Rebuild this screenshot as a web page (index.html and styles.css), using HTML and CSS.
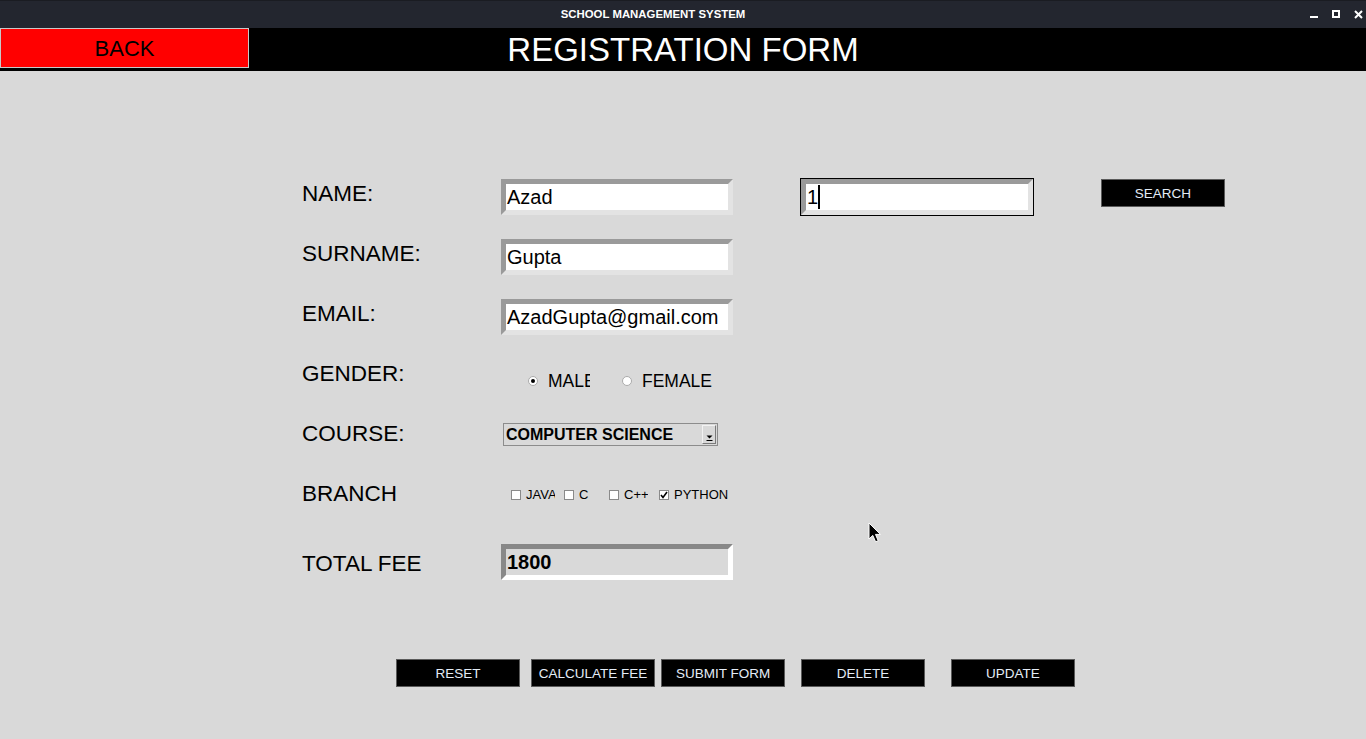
FILE: index.html
```html
<!DOCTYPE html>
<html lang="en">
<head>
<meta charset="utf-8">
<title>SCHOOL MANAGEMENT SYSTEM</title>
<link rel="stylesheet" href="styles.css">
</head>
<body>
<div class="window">
  <div class="titlebar">
    <span class="wtitle">SCHOOL MANAGEMENT SYSTEM</span>
    <div class="controls">
      <span class="ctl-min"></span>
      <span class="ctl-max"></span>
      <svg class="ctl-close" width="9" height="9" viewBox="0 0 9 9"><path d="M1 1 L8 8 M8 1 L1 8" stroke="#fff" stroke-width="2"/></svg>
    </div>
  </div>
  <header class="head">
    <button class="back">BACK</button>
    <h1 class="title">REGISTRATION FORM</h1>
    <span class="spacer"></span>
  </header>
  <main class="content">
    <div class="form">
      <div class="lbl">NAME:</div>
      <div class="cell"><div class="entry"><span class="val">Azad</span></div></div>
      <div class="cell"><div class="focus-ring"><div class="entry"><span class="val">1</span><span class="caret"></span></div></div></div>
      <div class="cell"><button class="tkbtn">SEARCH</button></div>

      <div class="lbl">SURNAME:</div>
      <div class="cell span3"><div class="entry"><span class="val">Gupta</span></div></div>

      <div class="lbl">EMAIL:</div>
      <div class="cell span3"><div class="entry"><span class="val">AzadGupta@gmail.com</span></div></div>

      <div class="lbl">GENDER:</div>
      <div class="cell span3">
        <div class="radios">
          <span class="radio on"></span><span class="rtext male">MALE</span>
          <span class="radio fem"></span><span class="rtext">FEMALE</span>
        </div>
      </div>

      <div class="lbl">COURSE:</div>
      <div class="cell span3">
        <div class="select">
          <span class="sel-text">COMPUTER SCIENCE</span>
          <span class="sel-btn"><svg width="7" height="6" viewBox="0 0 7 6"><path d="M0.5 0.5 H6.5 L3.5 3.5 Z" fill="#000"/><path d="M0.5 5.5 H6.5" stroke="#000" stroke-width="1"/></svg></span>
        </div>
      </div>

      <div class="lbl">BRANCH</div>
      <div class="cell span3">
        <div class="checks">
          <span class="chk w-java"><span class="box"></span><span class="ctext">JAVA</span></span>
          <span class="chk w-c"><span class="box"></span><span class="ctext">C</span></span>
          <span class="chk w-cpp"><span class="box"></span><span class="ctext">C++</span></span>
          <span class="chk w-py"><span class="box"><svg width="8" height="8" viewBox="0 0 8 8"><path d="M1 4 L3 6.5 L7 1" stroke="#000" stroke-width="1.6" fill="none"/></svg></span><span class="ctext">PYTHON</span></span>
        </div>
      </div>

      <div class="lbl lbl-fee">TOTAL FEE</div>
      <div class="cell span3"><div class="entry fee"><span class="val">1800</span></div></div>
    </div>

    <div class="actions">
      <button class="tkbtn">RESET</button>
      <button class="tkbtn g11">CALCULATE FEE</button>
      <button class="tkbtn g6">SUBMIT FORM</button>
      <button class="tkbtn g16">DELETE</button>
      <button class="tkbtn g26">UPDATE</button>
    </div>
  </main>
  <svg class="pointer" width="14" height="22" viewBox="0 0 14 22"><path d="M1 1 L1 17 L4.8 13.4 L7.6 19.8 L10.2 18.7 L7.5 12.4 L12.5 12.4 Z" fill="#000" stroke="#fff" stroke-width="1"/></svg>
</div>
</body>
</html>
```
FILE: styles.css
```css
* { box-sizing: border-box; }
html, body { margin: 0; padding: 0; }
body {
  width: 1366px;
  height: 739px;
  overflow: hidden;
  background: #d9d9d9;
  font-family: "Liberation Sans", Arial, sans-serif;
}
.window {
  position: relative;
  width: 1366px;
  height: 739px;
  background: #d9d9d9;
}

/* title bar */
.titlebar {
  height: 28px;
  background: #23262f;
  border-top: 1px solid #1a1c22;
  display: flex;
  align-items: center;
  padding-right: 60px;
}
.wtitle {
  flex: 1;
  text-align: center;
  color: #fff;
  font-size: 11.4px;
  font-weight: bold;
  margin-top: -2px;
}
.controls {
  position: absolute;
  right: 0;
  top: 0;
  height: 28px;
  width: 60px;
}
.ctl-min {
  position: absolute;
  left: 4px;
  top: 16px;
  width: 8px;
  height: 2px;
  background: #fff;
}
.ctl-max {
  position: absolute;
  left: 26px;
  top: 10px;
  width: 8px;
  height: 8px;
  border: 2px solid #fff;
}
.ctl-close {
  position: absolute;
  left: 48px;
  top: 10px;
}

/* header */
.head {
  height: 43px;
  background: #000;
  display: grid;
  grid-template-columns: 249px 1fr 249px;
  align-items: start;
}
.back {
  width: 249px;
  height: 40px;
  margin: 0;
  padding: 0;
  background: #ff0000;
  border: 1px solid #c8c8c8;
  color: #000;
  font-family: "Liberation Sans", Arial, sans-serif;
  font-size: 22px;
  line-height: 40px;
}
.title {
  margin: 0;
  text-align: center;
  color: #fff;
  font-weight: normal;
  font-size: 33px;
  line-height: 43px;
}

/* form */
.content {
  padding-top: 108px;
}
.form {
  margin-left: 302px;
  display: grid;
  grid-template-columns: 199px 299px 301px 124px;
  grid-template-rows: repeat(6, 60px) auto;
}
.span3 { grid-column: 2 / span 3; }
.lbl {
  font-size: 22.5px;
  line-height: 26px;
  margin-top: 2px;
  color: #000;
}
.lbl-fee { margin-top: 12px; }
.cell { min-width: 0; }

.entry {
  width: 232px;
  height: 36px;
  border: 5px solid;
  border-color: #9a9a9a #e3e3e3 #e3e3e3 #9a9a9a;
  background: #fff;
  font-size: 20px;
  line-height: 26px;
  padding-left: 1px;
  color: #000;
  display: flex;
  align-items: center;
  white-space: nowrap;
  overflow: hidden;
}
.focus-ring {
  width: 234px;
  height: 38px;
  margin-top: -1px;
  border: 1px solid #000;
}
.focus-ring .entry { padding-left: 1px; }
.caret {
  display: inline-block;
  width: 2px;
  height: 24px;
  background: #000;
}
.fee {
  margin-top: 5px;
  background: #d9d9d9;
  border-color: #888888 #ffffff #ffffff #888888;
  font-weight: bold;
}

/* buttons */
.tkbtn {
  width: 124px;
  height: 28px;
  margin: 0;
  padding: 0;
  background: #000;
  border: 1px solid #5a5a5a;
  color: #e4ecf7;
  font-family: "Liberation Sans", Arial, sans-serif;
  font-size: 13.5px;
  line-height: 28px;
  text-align: center;
  white-space: nowrap;
}

/* radios */
.radios {
  margin-top: 12px;
  height: 20px;
  display: flex;
  align-items: center;
  font-size: 17.5px;
  color: #000;
}
.radio {
  width: 10px;
  height: 10px;
  border-radius: 50%;
  background: #fff;
  border: 1px solid #ababab;
  margin-left: 27px;
  position: relative;
  flex: none;
}
.radio.on::after {
  content: "";
  position: absolute;
  left: 2px;
  top: 2px;
  width: 4px;
  height: 4px;
  border-radius: 50%;
  background: #000;
}
.radio.fem { margin-left: 32px; }
.rtext {
  margin-left: 10px;
  line-height: 20px;
  white-space: nowrap;
}
.rtext.male {
  width: 42px;
  overflow: hidden;
}

/* select */
.select {
  margin-top: 4px;
  margin-left: 2px;
  width: 215px;
  height: 23px;
  border: 1px solid #8c8c8c;
  background: #d9d9d9;
  display: flex;
  align-items: center;
  position: relative;
}
.sel-text {
  font-size: 16px;
  font-weight: bold;
  padding-left: 2px;
  color: #000;
  flex: 1;
}
.sel-btn {
  width: 14px;
  height: 19px;
  margin-right: 1px;
  border: 1px solid;
  border-color: #f2f2f2 #7a7a7a #7a7a7a #f2f2f2;
  display: flex;
  align-items: flex-end;
  justify-content: center;
  padding-bottom: 2px;
}

/* checkboxes */
.checks {
  margin-top: 8px;
  margin-left: 9px;
  height: 16px;
  display: flex;
  align-items: center;
  gap: 8px;
}
.chk {
  display: flex;
  align-items: center;
  overflow: hidden;
  white-space: nowrap;
  font-size: 13px;
  color: #000;
}
.w-java { width: 45px; }
.w-c { width: 37px; }
.w-cpp { width: 40px; margin-right: 2px; }
.w-py { width: 71px; }
.box {
  width: 10px;
  height: 10px;
  margin-left: 1px;
  background: #fff;
  border: 1px solid #8a8a8a;
  flex: none;
  display: flex;
  align-items: center;
  justify-content: center;
}
.ctext { margin-left: 5px; line-height: 16px; }

/* actions */
.actions {
  margin-top: 79px;
  padding-left: 396px;
  display: flex;
}
.g11 { margin-left: 11px; }
.g6 { margin-left: 6px; }
.g16 { margin-left: 16px; }
.g26 { margin-left: 26px; }

.pointer {
  position: absolute;
  left: 868px;
  top: 522px;
}
```
